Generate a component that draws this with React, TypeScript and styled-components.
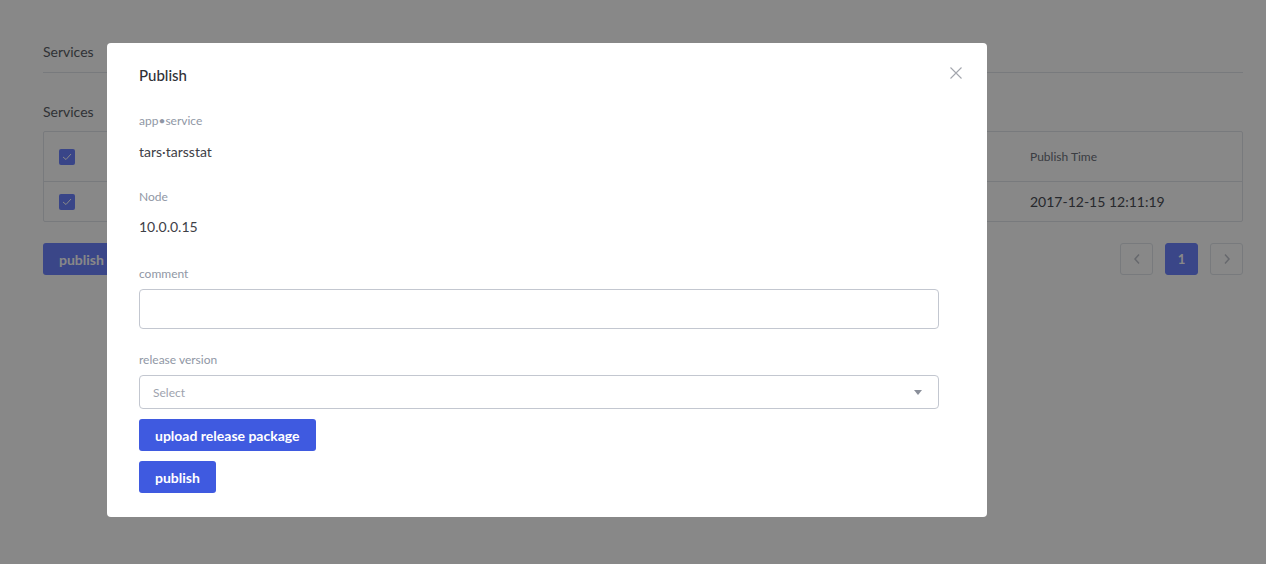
import React from 'react'
import styled, { createGlobalStyle } from 'styled-components'

const GlobalStyle = createGlobalStyle`
  html, body { margin: 0; padding: 0; background: #fff; }
  body { font-family: Lato, "Open Sans", sans-serif; color: #333; }
  * { box-sizing: border-box; }
`

const Page = styled.div`
  width: 1266px;
  height: 564px;
  padding: 40px 23px 0 43px;
  position: relative;
  overflow: hidden;
`

const SectionTitle = styled.div<{ $line?: boolean }>`
  font-size: 14px;
  color: #5a5e66;
  height: ${(p) => (p.$line ? '33px' : 'auto')};
  line-height: 24px;
  border-bottom: ${(p) => (p.$line ? '1px solid #e1e4ea' : 'none')};
  margin-bottom: ${(p) => (p.$line ? '27px' : '7px')};
`

const Table = styled.div`
  border: 1px solid #e1e4ea;
  border-radius: 2px;
`

const Row = styled.div<{ $head?: boolean }>`
  display: grid;
  grid-template-columns: 971px 1fr;
  align-items: center;
  height: ${(p) => (p.$head ? '49px' : '40px')};
  border-top: ${(p) => (p.$head ? 'none' : '1px solid #e1e4ea')};
  font-size: ${(p) => (p.$head ? '12px' : '14px')};
  color: ${(p) => (p.$head ? '#6d727c' : '#4a4d55')};
  padding-left: 15px;
`

const Check = styled.span`
  width: 16px;
  height: 16px;
  border-radius: 2px;
  background: #6c82ff;
  display: flex;
  align-items: center;
  justify-content: center;
`

const Footer = styled.div`
  display: flex;
  justify-content: space-between;
  margin-top: 21px;
`

const Pager = styled.div`
  display: flex;
  gap: 12px;
`

const PageBtn = styled.div<{ $active?: boolean }>`
  width: 33px;
  height: 32px;
  border-radius: 3px;
  border: 1px solid ${(p) => (p.$active ? '#6d83ff' : '#e1e4ea')};
  background: ${(p) => (p.$active ? '#6d83ff' : '#fff')};
  color: ${(p) => (p.$active ? '#fff' : '#c0c4cc')};
  font-size: 13px;
  font-weight: 700;
  display: flex;
  align-items: center;
  justify-content: center;
`

const Button = styled.button<{ $bg?: string }>`
  height: 32px;
  padding: 0 16px;
  border: none;
  border-radius: 3px;
  background: ${(p) => p.$bg || '#3f5ae0'};
  color: #fff;
  font-family: Lato, sans-serif;
  font-size: 14px;
  font-weight: 700;
  align-self: flex-start;
`

const Mask = styled.div`
  position: absolute;
  inset: 0;
  background: rgba(0, 0, 0, 0.465);
  padding: 43px 0 0 107px;
`

const Modal = styled.div`
  position: relative;
  width: 880px;
  height: 474px;
  background: #fff;
  border-radius: 4px;
  padding: 22px 32px 0;
  display: flex;
  flex-direction: column;
`

const ModalTitle = styled.div`
  font-size: 15px;
  font-weight: 500;
  color: #2f3136;
  line-height: 20px;
  margin-bottom: 28px;
`

const Close = styled.div`
  position: absolute;
  top: 23px;
  right: 24px;
  width: 14px;
  height: 14px;
  display: flex;
`

const Field = styled.div<{ $gap?: number }>`
  display: flex;
  flex-direction: column;
  margin-bottom: ${(p) => p.$gap ?? 0}px;
`

const Label = styled.div<{ $space?: number }>`
  font-size: 12px;
  color: #9097a5;
  line-height: 16px;
  margin-bottom: ${(p) => p.$space ?? 14}px;
`

const Value = styled.div`
  font-size: 14px;
  color: #3e4047;
  line-height: 18px;
`

const Input = styled.div`
  width: 800px;
  height: 40px;
  border: 1px solid #c3c7d0;
  border-radius: 4px;
  margin-top: -7px;
`

const Select = styled.div`
  width: 800px;
  height: 34px;
  border: 1px solid #c3c7d0;
  border-radius: 4px;
  margin-top: -7px;
  padding: 0 16px 0 13px;
  display: flex;
  align-items: center;
  justify-content: space-between;
  font-size: 12px;
  color: #9ea3ae;
`

const Caret = styled.span`
  width: 0;
  height: 0;
  border-left: 4px solid transparent;
  border-right: 4px solid transparent;
  border-top: 5px solid #8a8f9a;
`

const Buttons = styled.div`
  display: flex;
  flex-direction: column;
  gap: 10px;
  margin-top: 10px;
`

const Tick = () => (
  <svg width="10" height="8" viewBox="0 0 10 8">
    <path d="M1 4 L4 6.5 L9 1" stroke="#fff" strokeWidth="1" fill="none" />
  </svg>
)

const Chevron = ({ dir }: { dir: 'left' | 'right' }) => (
  <svg width="8" height="12" viewBox="0 0 8 12">
    <path
      d={dir === 'left' ? 'M6 1.5 L2 6 L6 10.5' : 'M2 1.5 L6 6 L2 10.5'}
      stroke="#c0c4cc"
      strokeWidth="1.5"
      fill="none"
    />
  </svg>
)

export default function App() {
  return (
    <>
      <GlobalStyle />
      <Page>
        <SectionTitle $line>Services</SectionTitle>
        <SectionTitle>Services</SectionTitle>
        <Table>
          <Row $head>
            <Check>
              <Tick />
            </Check>
            <span>Publish Time</span>
          </Row>
          <Row>
            <Check>
              <Tick />
            </Check>
            <span>2017-12-15 12:11:19</span>
          </Row>
        </Table>
        <Footer>
          <Button $bg="#6d83ff">publish</Button>
          <Pager>
            <PageBtn>
              <Chevron dir="left" />
            </PageBtn>
            <PageBtn $active>1</PageBtn>
            <PageBtn>
              <Chevron dir="right" />
            </PageBtn>
          </Pager>
        </Footer>

        <Mask>
          <Modal>
            <ModalTitle>Publish</ModalTitle>
            <Close>
              <svg width="14" height="14" viewBox="0 0 14 14">
                <path d="M1.5 1.5 L12.5 12.5 M12.5 1.5 L1.5 12.5" stroke="#a3a6ad" strokeWidth="1.1" />
              </svg>
            </Close>
            <Field $gap={28}>
              <Label>app•service</Label>
              <Value>tars·tarsstat</Value>
            </Field>
            <Field $gap={30}>
              <Label $space={13}>Node</Label>
              <Value>10.0.0.15</Value>
            </Field>
            <Field $gap={23}>
              <Label>comment</Label>
              <Input />
            </Field>
            <Field>
              <Label>release version</Label>
              <Select>
                Select
                <Caret />
              </Select>
            </Field>
            <Buttons>
              <Button>upload release package</Button>
              <Button>publish</Button>
            </Buttons>
          </Modal>
        </Mask>
      </Page>
    </>
  )
}
